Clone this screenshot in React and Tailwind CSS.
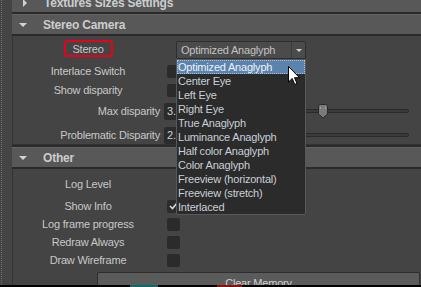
import React from "react";

function Header({ title, open = true, className = "" }) {
  return (
    <div className={`h-[20px] shrink-0 bg-[#585858] border-t border-[#646464] flex items-center ${className}`}>
      {open ? (
        <div className="ml-[7px] w-0 h-0 border-l-[4px] border-r-[4px] border-t-[4px] border-l-transparent border-r-transparent border-t-[#d2d2d2]" />
      ) : (
        <div className="ml-[11px] w-0 h-0 border-t-[4px] border-b-[4px] border-l-[4px] border-t-transparent border-b-transparent border-l-[#d2d2d2]" />
      )}
      <span className={`${open ? "ml-[16px]" : "ml-[17px]"} font-bold text-[12px] text-[#cdcdcd] leading-none`}>{title}</span>
    </div>
  );
}

function Label({ children, align = "center" }) {
  return (
    <div className={`w-[151px] shrink-0 pl-[3px] pr-[4px] ${align === "right" ? "text-right" : "text-center"} whitespace-nowrap`}>
      {children}
    </div>
  );
}

function Check({ checked }) {
  return (
    <div className="ml-[3px] w-[13px] h-[13px] bg-[#2b2b2b] rounded-[2px] flex items-center justify-center">
      {checked && (
        <svg width="9" height="8" viewBox="0 0 9 8">
          <path d="M1 4 L3.5 6.5 L8 1" stroke="#d8d8d8" strokeWidth="1.6" fill="none" />
        </svg>
      )}
    </div>
  );
}

function SliderRow({ label, value, thumb }) {
  return (
    <div className="h-[18px] flex items-center">
      <Label align="right">{label}</Label>
      <div className="w-[60px] h-[17px] bg-[#2b2b2b] rounded-[2px] pl-[3px] flex items-center text-[#cfcfcf]">{value}</div>
      <div className="flex-1 ml-[6px] mr-[12px] relative h-[14px] flex items-center">
        <div className="w-full h-[4px] rounded-full border border-[#2a2a2a] bg-[#3b3b3b]" />
        {thumb && (
          <svg className="absolute left-[87px] top-0" width="12" height="15" viewBox="0 0 12 15">
            <path d="M1.5 2.5 Q1.5 0.5 3.5 0.5 L8.5 0.5 Q10.5 0.5 10.5 2.5 L10.5 10 L6 14 L1.5 10 Z" fill="#7b7b7b" stroke="#2a2a2a" />
            <path d="M3.5 3 L3.5 5 M8.5 3 L8.5 5" stroke="#a0a0a0" />
          </svg>
        )}
      </div>
    </div>
  );
}

const items = [
  "Optimized Anaglyph",
  "Center Eye",
  "Left Eye",
  "Right Eye",
  "True Anaglyph",
  "Luminance Anaglyph",
  "Half color Anaglyph",
  "Color Anaglyph",
  "Freeview (horizontal)",
  "Freeview (stretch)",
  "Interlaced",
];

export default function App() {
  return (
    <div className="w-[421px] h-[287px] bg-[#444444] overflow-hidden relative flex font-['Liberation_Sans',Arial,sans-serif] text-[11px] tracking-[-0.2px] text-[#c8c8c8] leading-none">
      {/* left dotted strip */}
      <div className="w-[12px] shrink-0 flex">
        <div className="ml-[1px] h-full border-l border-dotted border-[#6e6e6e]" />
      </div>

      {/* main column */}
      <div className="flex-1 flex flex-col min-w-0">
        <Header title="Textures Sizes Settings" open={false} className="-mt-[8px]" />
        <div className="h-[2px] shrink-0 bg-[#2a2a2a]" />
        <Header title="Stereo Camera" />
        <div className="h-[2px] shrink-0 bg-[#2a2a2a]" />

        {/* Stereo Camera content */}
        <div className="border-l border-b border-[#333333] pt-[4px] flex flex-col shrink-0">
          <div className="h-[19px] flex items-center">
            <Label>Stereo</Label>
            <div className="ml-[12px] mt-[1px] w-[130px] h-[18px] bg-[#4b4b4b] border border-[#2e2e2e] rounded-[2px] flex items-center">
              <span className="flex-1 pl-[4px] text-[#c2c2c2] whitespace-nowrap">Optimized Anaglyph</span>
              <div className="w-[14px] h-full border-l border-[#3a3a3a] flex items-center justify-center">
                <div className="w-0 h-0 border-l-[3px] border-r-[3px] border-t-[3px] border-l-transparent border-r-transparent border-t-[#cfcfcf]" />
              </div>
            </div>
          </div>
          <div className="mt-[3px] h-[18px] flex items-center">
            <Label>Interlace Switch</Label>
            <Check />
          </div>
          <div className="mt-[1px] h-[18px] flex items-center">
            <Label>Show disparity</Label>
            <Check />
          </div>
          <div className="mt-[3px]">
            <SliderRow label="Max disparity" value="3.000" thumb />
          </div>
          <div className="mt-[6px]">
            <SliderRow label="Problematic Disparity" value="2.000" />
          </div>
        </div>

        <div className="h-[2px] shrink-0 bg-[#2a2a2a]" />
        <Header title="Other" />
        <div className="h-[2px] shrink-0 bg-[#2a2a2a]" />

        {/* Other content */}
        <div className="flex-1 border-l border-[#333333] pt-[5px] flex flex-col">
          <div className="h-[20px] flex items-center">
            <Label>Log Level</Label>
            <div className="ml-[12px] w-[100px] h-[18px] bg-[#4b4b4b] border border-[#2e2e2e] rounded-[2px]" />
          </div>
          <div className="mt-[3px] h-[18px] flex items-center">
            <Label>Show Info</Label>
            <Check checked />
          </div>
          <div className="h-[18px] flex items-center">
            <Label>Log frame progress</Label>
            <Check />
          </div>
          <div className="h-[18px] flex items-center">
            <Label>Redraw Always</Label>
            <Check />
          </div>
          <div className="h-[18px] flex items-center">
            <Label>Draw Wireframe</Label>
            <Check />
          </div>
          <div className="mt-[3px] ml-[84px] mr-[1px] h-[22px] shrink-0 bg-[#5b5b5b] border border-[#2e2e2e] rounded-[2px] flex items-center justify-center text-[#cfcfcf]">
            Clear Memory
          </div>
        </div>
      </div>

      {/* red highlight around Stereo label */}
      <div className="absolute left-[64px] top-[40px] w-[49px] h-[17px] border-2 border-[#e8001c] rounded-[4px]" />

      {/* dropdown list */}
      <div className="absolute left-[176px] top-[59px] w-[130px] h-[156px] bg-[#2b2b2b] border border-[#585858] rounded-b-[2px] flex flex-col">
        {items.map((it, i) => (
          <div
            key={it}
            className={`h-[14px] shrink-0 flex items-center pl-[1px] whitespace-nowrap ${
              i === 0 ? "bg-[#5c83ae] text-[#eef2f7] outline outline-1 outline-dotted outline-[#a9c0da] -outline-offset-1" : "text-[#c9cfd8]"
            }`}
          >
            {it}
          </div>
        ))}
      </div>

      {/* mouse cursor */}
      <svg className="absolute left-[288px] top-[66px]" width="13" height="20" viewBox="0 0 13 20">
        <path d="M0.5 0.5 L0.5 16 L4.2 12.5 L6.8 18.5 L9 17.5 L6.5 11.7 L11.5 11.7 Z" fill="#ffffff" stroke="#000000" strokeWidth="1" strokeLinejoin="miter" />
      </svg>

      {/* bottom edge strip */}
      <div className="absolute left-0 bottom-0 w-full h-[2px] bg-black flex">
        <div className="ml-[130px] w-[28px] h-full bg-[#0f6a6a]" />
        <div className="ml-[59px] w-[25px] h-full bg-[#8a1010]" />
      </div>
    </div>
  );
}
